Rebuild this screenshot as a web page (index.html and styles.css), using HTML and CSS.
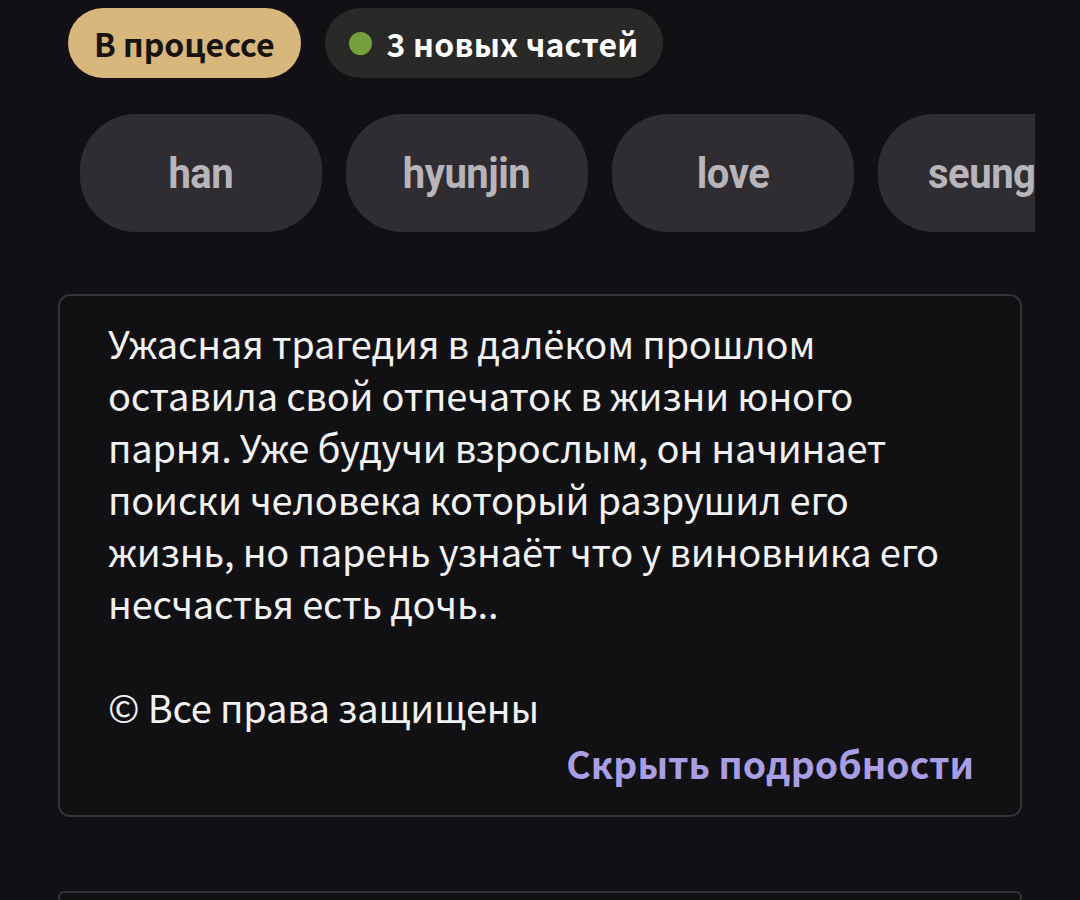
FILE: index.html
```html
<!DOCTYPE html>
<html lang="ru">
<head>
<meta charset="utf-8">
<title>Описание</title>
<link rel="stylesheet" href="styles.css">
</head>
<body>
<div class="page">
  <div class="status-row">
    <span class="badge badge-status">В процессе</span>
    <span class="badge badge-new"><span class="dot"></span>3 новых частей</span>
  </div>
  <div class="tags">
    <span class="tag"><span class="tag-text">han</span></span>
    <span class="tag"><span class="tag-text">hyunjin</span></span>
    <span class="tag"><span class="tag-text">love</span></span>
    <span class="tag"><span class="tag-text">seungmin</span></span>
  </div>
  <div class="card">
    <p class="desc">Ужасная трагедия в далёком прошлом оставила свой отпечаток в жизни юного парня. Уже будучи взрослым, он начинает поиски человека который разрушил его жизнь, но парень узнаёт что у виновника его несчастья есть дочь..<br><br>© Все права защищены</p>
    <div class="toggle-row"><span class="toggle">Скрыть подробности</span></div>
  </div>
  <div class="card card-next"></div>
</div>
</body>
</html>
```
FILE: styles.css
```css
html, body {
  margin: 0;
  padding: 0;
  background: #121014;
  height: 100%;
  overflow: hidden;
}
.page {
  padding: 8px 58px 0 58px;
  font-family: "Noto Sans CJK SC", "Noto Sans", sans-serif;
}
.status-row {
  display: flex;
  gap: 24px;
  padding-left: 10px;
}
.badge {
  height: 70px;
  border-radius: 35px;
  display: inline-flex;
  align-items: center;
  font-weight: 700;
  font-size: 32px;
  box-sizing: border-box;
}
.badge-status {
  background: #d8b77c;
  color: #17130e;
  padding: 0 26px;
}
.badge-new {
  background: #292927;
  color: #ffffff;
  padding: 0 25px 0 24px;
  gap: 15px;
  letter-spacing: 0.2px;
}
.dot {
  width: 23px;
  height: 23px;
  border-radius: 50%;
  background: #76a03c;
}
.tags {
  display: flex;
  gap: 24px;
  margin: 36px 0 0 22px;
  width: 955px;
  overflow: hidden;
}
.tag {
  flex: 0 0 auto;
  width: 242px;
  height: 118px;
  border-radius: 56px;
  background: #2f2d31;
  display: flex;
  align-items: center;
  justify-content: center;
  overflow: hidden;
}
.tag-text {
  color: #b7b5ba;
  font-family: Roboto, Inter, sans-serif;
  font-weight: 700;
  font-size: 43px;
  letter-spacing: -0.5px;
  transform: scaleX(0.93);
  white-space: nowrap;
}
.tag:last-child {
  justify-content: flex-start;
  padding-left: 50px;
  box-sizing: border-box;
}
.tag:last-child .tag-text {
  transform-origin: left center;
}
.card {
  margin-top: 62px;
  border: 2px solid #333236;
  border-radius: 12px;
  background: #111013;
  padding: 21px 48px 26px 48px;
}
.desc {
  margin: 0 17px 0 0;
  color: #f2f2f2;
  font-size: 38px;
  line-height: 52px;
  letter-spacing: -0.2px;
  font-weight: 400;
}
.toggle-row {
  display: flex;
  justify-content: flex-end;
  margin: 5px -2px 0 0;
}
.toggle {
  color: #a99de3;
  font-weight: 700;
  font-size: 37.4px;
  line-height: 51px;
}
.card-next {
  margin-top: 74px;
  height: 8px;
  padding: 0;
}
```
